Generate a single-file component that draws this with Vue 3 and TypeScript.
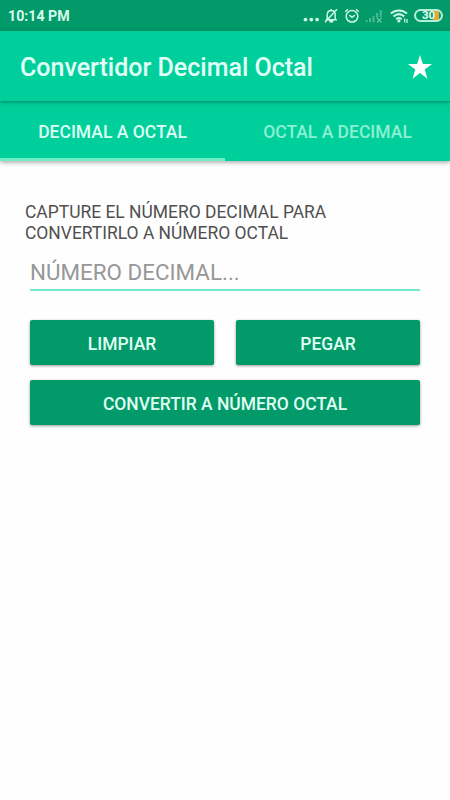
<script setup lang="ts">
import { ref } from 'vue'

type Mode = 'decimal' | 'octal'

const mode = ref<Mode>('decimal')
const value = ref('')

function clear(): void {
  value.value = ''
}

async function paste(): Promise<void> {
  value.value = await navigator.clipboard.readText()
}

function convert(): void {
  const [from, to] = mode.value === 'decimal' ? [10, 8] : [8, 10]
  const parsed = parseInt(value.value, from)
  if (!Number.isNaN(parsed)) value.value = parsed.toString(to)
}
</script>

<template>
  <div class="screen">
    <header class="status">
      <span class="clock">10:14 PM</span>
      <div class="indicators">
        <svg class="dots" width="17" height="16" viewBox="0 0 17 16">
          <circle cx="2.5" cy="11.6" r="1.9" />
          <circle cx="8.3" cy="11.6" r="1.9" />
          <circle cx="14.1" cy="11.6" r="1.9" />
        </svg>
        <svg class="line bell" width="15" height="16" viewBox="0 0 15 16">
          <path d="M1.600 11.700h11.300M3.200 11.500V7c0-2.700 1.500-4.600 4-4.600S11.200 4.300 11.200 7v4.500M7.200 1v1.200M1 14.200 13 1.200" />
          <path d="M5.700 12.500h3.200c0 2-3.200 2-3.200 0z" />
        </svg>
        <svg class="line alarm" width="16" height="16" viewBox="0 0 16 16">
          <circle cx="8" cy="8.300" r="5.800" />
          <path d="M1.200 3.800 4 1.300M14.800 3.800 12 1.300M5.300 7.100 8 9.300l2.900-2.200" />
        </svg>
        <svg class="signal" width="18" height="16" viewBox="0 0 18 16">
          <path class="faint" d="M.5 12h2v2.200h-2zM4 10h2v4.200H4zM7.500 7.700h2v6.500h-2zM11 5h2v4.500h-2zM14.700 2h2v7h-2z" />
          <path class="cross" d="m12 10 4.500 4.500m0-4.500L12 14.500" />
        </svg>
        <svg class="wifi" width="20" height="16" viewBox="0 0 20 16">
          <path d="M.8 5.600C5.400 1.300 12.400 1.300 17 5.600M3.500 8.500c3.300-2.900 7.500-2.900 10.800 0M6.100 11.200c1.700-1.400 3.900-1.400 5.600 0" />
          <circle cx="8.900" cy="12.900" r="1.600" />
          <path class="arrows" d="M14.700 14.500v-4M17 11v4" />
        </svg>
        <div class="battery"><span>30</span></div>
      </div>
    </header>

    <div class="appbar">
      <h1>Convertidor Decimal Octal</h1>
      <svg class="star" width="26" height="26" viewBox="0 0 26 26">
        <path d="m13 1 2.900 8.900h9.200l-7.400 5.600 2.800 9.200L13 19.100l-7.500 5.600 2.800-9.200L.9 9.900h9.200z" />
      </svg>
    </div>

    <nav class="tabs">
      <button :class="{ active: mode === 'decimal' }" @click="mode = 'decimal'"><span>DECIMAL A OCTAL</span></button>
      <button :class="{ active: mode === 'octal' }" @click="mode = 'octal'"><span>OCTAL A DECIMAL</span></button>
    </nav>

    <main>
      <p>CAPTURE EL NÚMERO DECIMAL PARA<br />CONVERTIRLO A NÚMERO OCTAL</p>
      <input v-model="value" type="text" placeholder="NÚMERO DECIMAL..." />
      <div class="actions">
        <button @click="clear">LIMPIAR</button>
        <button @click="paste">PEGAR</button>
        <button class="wide" @click="convert">CONVERTIR A NÚMERO OCTAL</button>
      </div>
    </main>
  </div>
</template>

<style>
body {
  background: #fefefe;
}
</style>

<style scoped>
.screen {
  height: 800px;
  overflow: hidden;
  background: #fefefe;
  font-family: Roboto, sans-serif;
}

button {
  border: 0;
  font-family: inherit;
  font-weight: 500;
}

.status {
  display: flex;
  justify-content: space-between;
  box-sizing: border-box;
  height: 31px;
  padding: 0 7px 0 8px;
  background: #039a6a;
}

.clock {
  color: #d5fbec;
  font-size: 14.200px;
  font-weight: 700;
  line-height: 33px;
}

.indicators {
  display: flex;
  height: 16px;
  padding-top: 8px;
  fill: #c9f8e6;
}

.bell {
  margin-left: 4px;
}

.alarm {
  margin-left: 5px;
}

.signal {
  margin-left: 5px;
}

.wifi {
  margin-left: 7px;
}

.line,
.wifi path,
.cross {
  fill: none;
  stroke: #c9f8e6;
  stroke-width: 1.5;
}

.wifi path {
  stroke-width: 2;
}

.wifi .arrows {
  stroke-width: 1.2;
}

.faint {
  fill: #4bb894;
}

.cross {
  stroke: #65c5a5;
  stroke-width: 1.2;
}

.battery {
  box-sizing: border-box;
  width: 29px;
  height: 13px;
  margin: 1px 0 0 4px;
  padding: 0 0 0 6px;
  border: 2px solid #b5efda;
  border-radius: 7px;
  background: linear-gradient(90deg, transparent 17px, #e5a93a 17px, #e5a93a 23px, transparent 23px);
  color: #e2fff4;
  font-size: 11.500px;
  font-weight: 700;
  line-height: 9px;
}

.appbar {
  position: relative;
  display: flex;
  align-items: center;
  justify-content: space-between;
  box-sizing: border-box;
  height: 70px;
  padding: 2px 17px 0 20px;
  background: #01cf9b;
  box-shadow: 0 1px 4px rgba(0, 70, 50, 0.55);
}

h1 {
  margin: 0;
  padding-top: 2px;
  color: #e2fff7;
  font-size: 25px;
  font-weight: 500;
  line-height: 30px;
}

.star {
  fill: #fff;
}

.tabs {
  display: flex;
  height: 60px;
  background: #01cf9b;
  box-shadow: 0 1px 5px rgba(0, 0, 0, 0.4);
}

.tabs button {
  flex: 1;
  padding: 5px 0 0;
  border-bottom: 3px solid transparent;
  background: transparent;
  color: #8cf0d2;
  font-size: 17.500px;
}

.tabs .active {
  border-bottom-color: #6eedc6;
  color: #dcfff5;
}

main {
  padding: 41px 30px 0;
}

p {
  margin: 0 0 0 -5px;
  color: #505050;
  font-size: 17.450px;
  line-height: 20.500px;
  white-space: nowrap;
}

input {
  display: block;
  box-sizing: border-box;
  width: 100%;
  height: 48px;
  padding: 11px 0 0;
  border: 0;
  border-bottom: 2px solid #75eaca;
  outline: 0;
  background: transparent;
  color: #505050;
  font-family: inherit;
  font-size: 22.400px;
}

input::placeholder {
  color: #979797;
  opacity: 1;
}

.actions {
  display: grid;
  grid-template-columns: 1fr 1fr;
  gap: 15px 22px;
  margin-top: 29px;
}

.actions button {
  height: 45px;
  padding: 2px 0 0;
  border-radius: 2px;
  background: #039a6a;
  box-shadow: 0 1px 3px rgba(0, 0, 0, 0.4);
  color: #e0fff3;
  font-size: 17.450px;
}

.actions .wide {
  grid-column: 1 / -1;
}
</style>
